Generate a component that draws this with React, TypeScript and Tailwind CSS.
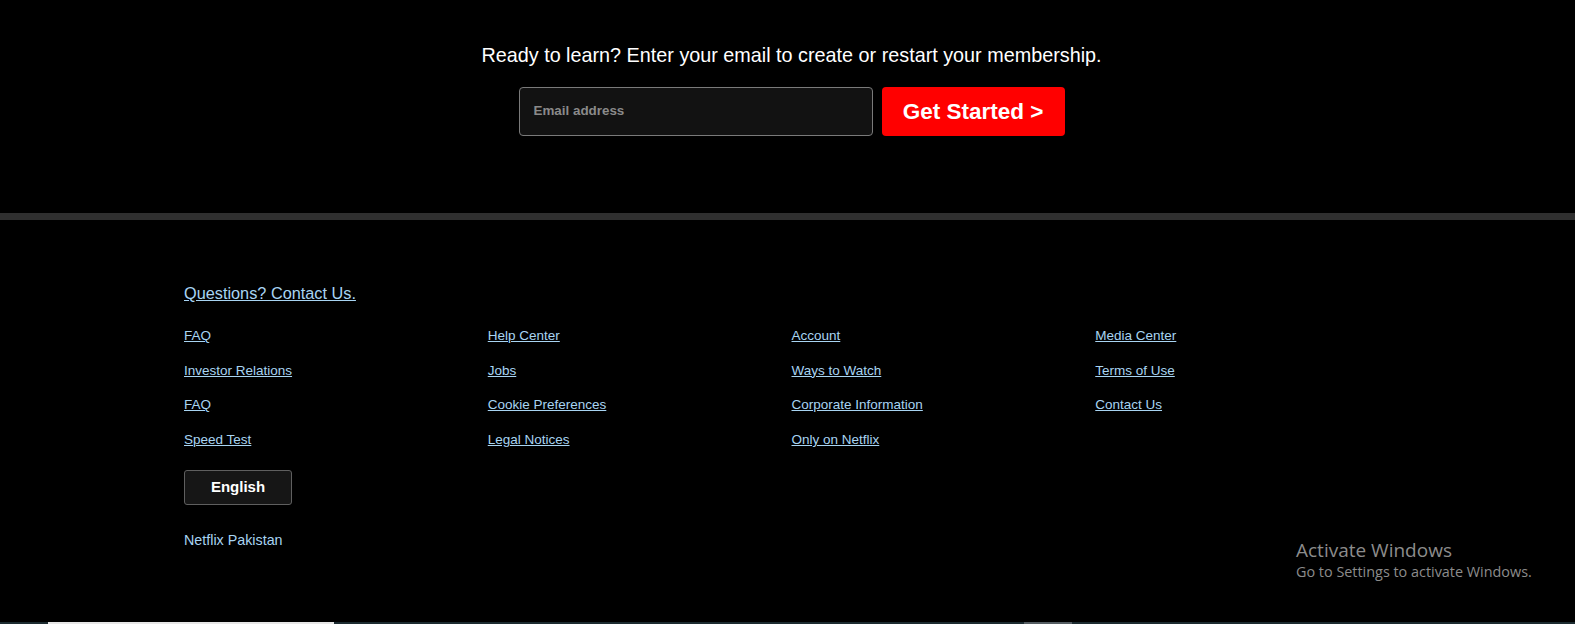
import React from "react";

const cols: string[][] = [
  ["FAQ", "Investor Relations", "FAQ", "Speed Test"],
  ["Help Center", "Jobs", "Cookie Preferences", "Legal Notices"],
  ["Account", "Ways to Watch", "Corporate Information", "Only on Netflix"],
  ["Media Center", "Terms of Use", "Contact Us"],
];

export default function App() {
  return (
    <div
      className="relative w-full h-[624px] bg-black overflow-hidden"
      style={{ fontFamily: '"Liberation Sans", Arial, sans-serif' }}
    >
      <div className="w-[1583px]">
        {/* Top CTA */}
        <section className="h-[213px] flex flex-col items-center pt-[43px]">
          <h3 className="text-[19.8px] leading-[24px] text-white">
            Ready to learn? Enter your email to create or restart your membership.
          </h3>
          <form className="mt-[20px] flex gap-[9px]">
            <div className="w-[354px] h-[49px] rounded-[4px] border border-[#7a7a7a] bg-[#121212] flex items-center px-[14px]">
              <span className="text-[13.4px] font-bold text-[#8a8a8a]">Email address</span>
            </div>
            <button
              type="button"
              className="w-[183px] h-[49px] rounded-[4px] bg-[#ff0000] text-white text-[22.5px] font-bold flex items-center justify-center"
            >
              Get Started &gt;
            </button>
          </form>
        </section>
      </div>

      {/* Divider */}
      <div className="h-[7px] bg-[#2f2f2f]" />

      <div className="w-[1583px]">
        {/* Footer */}
        <footer className="w-[1215px] mx-auto pt-[62px]">
          <a href="#" className="text-[16.3px] leading-[18px] underline text-[#a8d4f2]">
            Questions? Contact Us.
          </a>
          <div className="mt-[22px] grid grid-cols-4">
            {cols.map((col, i) => (
              <ul key={i} className="flex flex-col gap-y-[19.7px]">
                {col.map((l, j) => (
                  <li key={j} className="text-[13.5px] leading-[15px]">
                    <a href="#" className="underline text-[#a8d4f2]">
                      {l}
                    </a>
                  </li>
                ))}
              </ul>
            ))}
          </div>
          <button
            type="button"
            className="mt-[23px] w-[108px] h-[35px] rounded-[3px] border border-[#5f5f5f] bg-[#161616] text-white text-[15px] font-bold flex items-center justify-center"
          >
            English
          </button>
          <p className="mt-[27px] text-[14.3px] leading-[16px] text-[#a8d4f2]">Netflix Pakistan</p>
        </footer>
      </div>

      {/* Windows watermark */}
      <div
        className="absolute left-[1296px] top-[537px] text-[#8c8c8c] pointer-events-none"
        style={{ fontFamily: '"Open Sans", "Noto Sans", sans-serif' }}
      >
        <div className="text-[19px] leading-[26px]">Activate Windows</div>
        <div className="text-[14.4px] leading-[18px]">Go to Settings to activate Windows.</div>
      </div>

      {/* Taskbar edge */}
      <div className="absolute left-0 right-0 bottom-0 h-[2px] bg-[#1c2b30] flex">
        <div className="ml-[48px] w-[286px] h-full bg-[#e6e6e6]" />
        <div className="ml-[690px] w-[48px] h-full bg-[#555d62]" />
      </div>
    </div>
  );
}
